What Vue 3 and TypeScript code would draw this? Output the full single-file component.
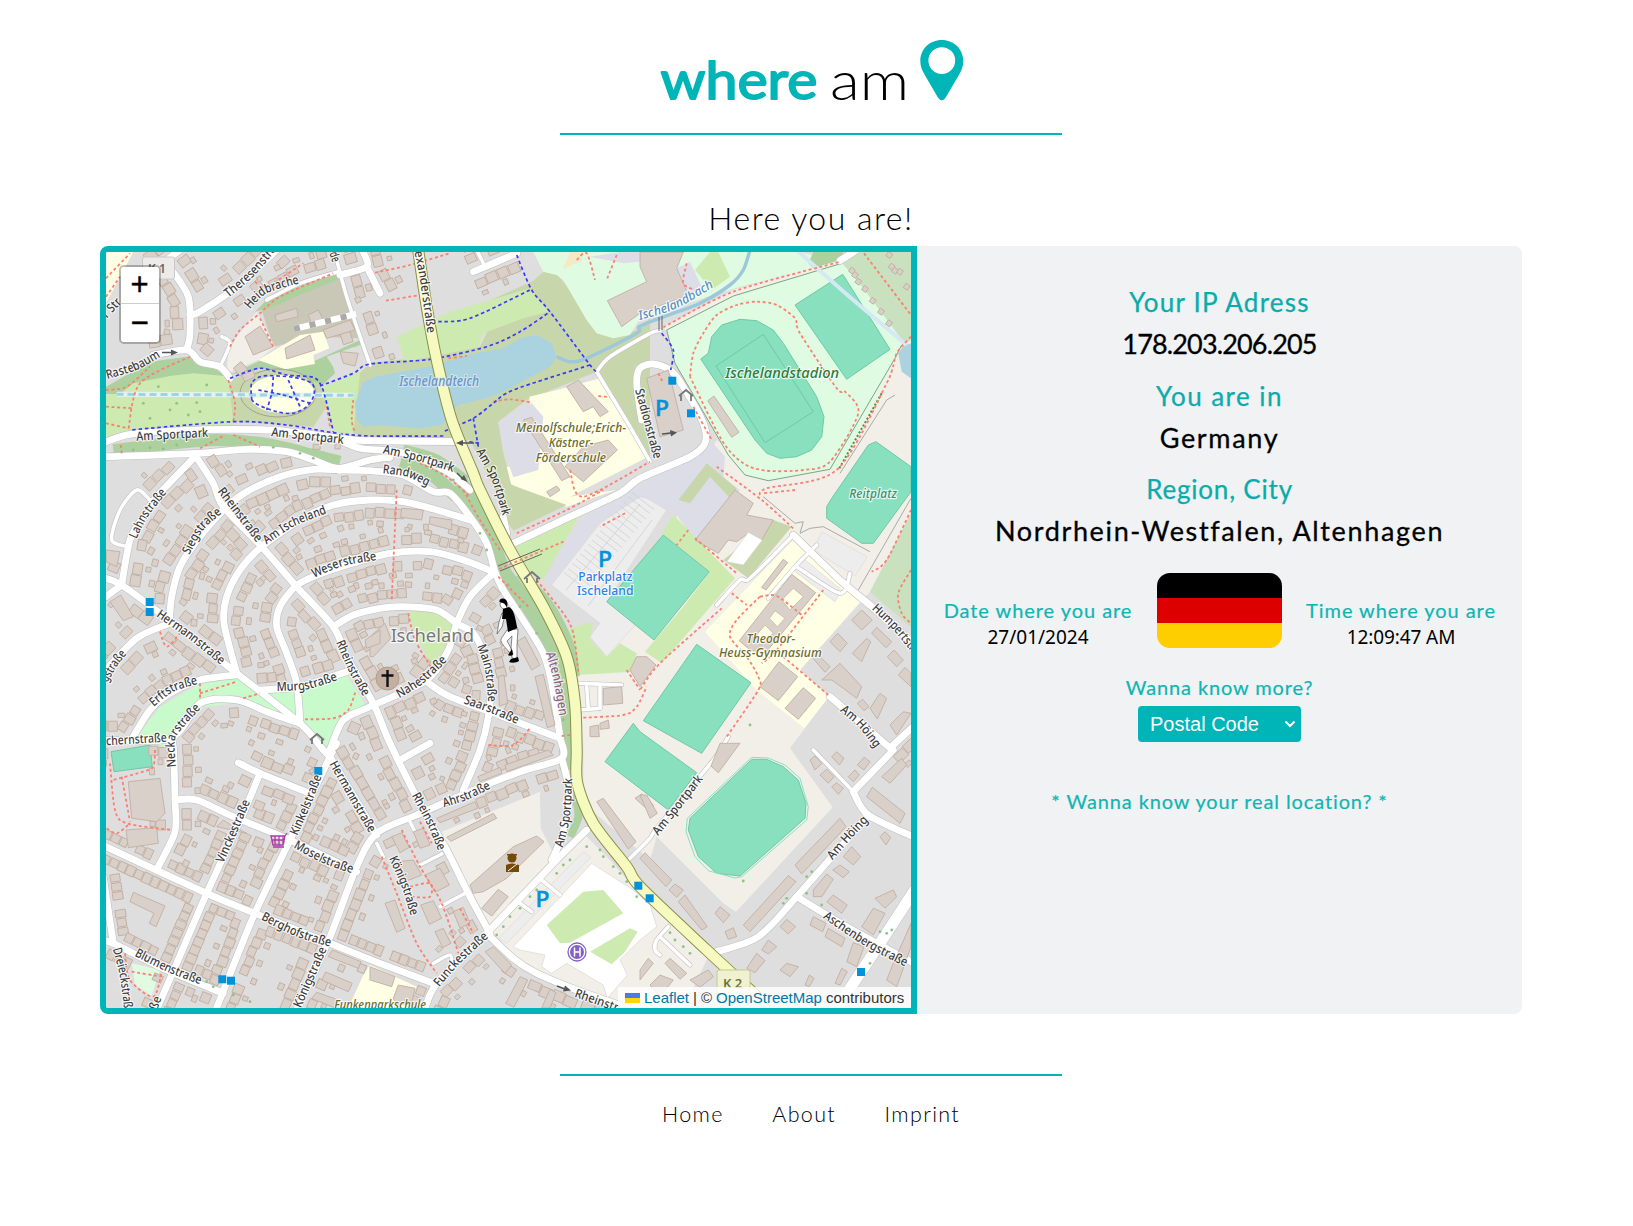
<script setup lang="ts">
type Pt = [number, number]

// Each sheet of the map is surveyed at 3 units per pixel from its own corner.
const sheets: Record<string, Pt> = {
  A: [100, 240], B: [370, 240], C: [640, 240],
  D: [100, 490], E: [370, 490], F: [640, 490],
  G: [100, 750], H: [370, 750], I: [640, 750],
}

function pts(src: string): Pt[] {
  let origin: Pt = [0, 0]
  const out: Pt[] = []
  for (const token of src.trim().split(/\s+/)) {
    if (sheets[token]) { origin = sheets[token]; continue }
    const [x, y] = token.split(',').map(Number)
    out.push([+(origin[0] + x / 3).toFixed(1), +(origin[1] + y / 3).toFixed(1)])
  }
  return out
}
const poly = (src: string) => pts(src).map((p) => p.join(',')).join(' ')

function curve(src: string): string {
  const p = pts(src)
  let d = `M${p[0]}`
  for (let i = 0; i < p.length - 1; i++) {
    const a = p[i - 1] ?? p[i], b = p[i], c = p[i + 1], e = p[i + 2] ?? c
    const k = 7
    d += `C${b[0] + (c[0] - a[0]) / k},${b[1] + (c[1] - a[1]) / k} ${c[0] - (e[0] - b[0]) / k},${c[1] - (e[1] - b[1]) / k} ${c[0]},${c[1]}`
  }
  return d
}

const areas: [string, string][] = [
  ['land', 'C 230,600 380,722 813,280 F 813,70 690,305 480,540 565,620 450,775 I 578,172 288,485 250,460 50,260 H 840,330 640,160 E 640,770 620,555 700,500'],
  ['land', 'H 215,245 510,125 512,235 560,330 345,540'],
  ['land', 'H 345,540 640,250 720,330 840,470 I 0,400 210,610 130,774 H 745,774 500,680'],
  ['school', 'A 18,36 100,36 18,190'],
  ['brown', 'A 485,210 520,190 720,100 780,295 655,290 520,320'],
  ['forest', 'A 465,215 500,180 712,92 722,115 600,165 520,200'],
  ['land', 'A 385,330 410,290 470,215 525,320 475,360 380,400'],
  ['grass', 'A 18,470 60,450 110,420 200,395 380,400 405,560 90,572 18,590'],
  ['forest', 'A 18,440 150,365 260,350 330,375 375,408 280,400 210,408 100,430 60,462 18,462'],
  ['forest', 'A 390,405 480,362 560,388 650,360 780,300 780,315 690,348 705,400 665,438 600,420 480,385'],
  ['school', 'A 475,360 600,285 670,275 688,325 640,345 645,372 555,388'],
  ['resid', 'A 680,350 760,322 812,370 720,412'],
  ['scrub', 'A 385,420 480,390 560,410 660,430 680,500 640,560 400,545'],
  ['grass', 'A 665,440 840,370 840,590 700,578'],
  ['scrub', 'A 780,400 B 0,368 180,350 330,320 350,280 340,190 490,122 520,95 560,102 600,150 650,240 680,275 730,295 800,270 840,235 840,660 680,395 470,480 385,545 400,640 440,780 390,780 300,600 0,590 A 760,580'],
  ['grass', 'B 80,290 240,215 480,145 535,215 460,235 340,280 325,320 105,365'],
  ['water', 'A 840,405 790,425 765,490 770,540 790,560 B 30,556 150,565 215,555 265,495 350,475 400,455 540,380 560,350 545,310 500,285 450,295 400,325 290,345 200,375 30,408'],
  ['sport', 'B 490,36 C 480,36 600,65 300,140 0,235 B 780,285 730,295 680,280 650,240 580,120 560,105 520,95'],
  ['grass', 'C 165,90 210,36 235,36 270,110 215,150'],
  ['sand', 'B 578,88 600,36 640,36 635,62'],
  ['indus', 'B 660,50 C -60,36 0,36 B 810,65 760,70'],
  ['indus', 'C 110,85 150,65 185,140 145,165'],
  ['allot', 'C 600,60 660,36 813,36 813,300 790,312 640,110'],
  ['forest', 'C 505,70 520,36 610,36 600,60 520,85'],
  ['land', 'C 70,262 280,150 600,62 610,70 280,170 80,275'],
  ['sport', 'C 80,270 280,168 605,70 640,105 790,305 765,355 600,680 385,722 315,705 265,645 105,370'],
  ['water', 'C 775,340 790,318 813,310 813,415 785,395'],
  ['allot', 'F 813,70 690,305 813,412'],
  ['school', 'B 478,470 560,450 690,415 835,650 600,770 E 740,0 590,50 430,10 410,-70 500,-70'],
  ['scrub', 'E 370,-40 440,-10 590,45 430,122 400,80'],
  ['indus', 'B 385,550 485,490 520,530 505,690 430,712 405,640'],
  ['indus', 'C 10,700 215,605 255,650 F 250,-30 300,0 165,150 105,70 60,50 0,30 E 690,95 540,285 520,270 590,150 640,85'],
  ['grass', 'E 430,165 625,80 520,270 460,235'],
  ['parking', 'E 545,285 690,100 F 0,20 20,25 80,60 E 710,335 800,400 710,500 660,440 690,400 600,330'],
  ['grass', 'E 605,490 600,415 670,395 660,450 710,500 750,460 800,490 790,545 620,555'],
  ['grass', 'F 15,485 65,520 285,265 135,110 100,75 65,130 210,245 130,350'],
  ['scrub', 'C 115,780 200,670 290,745 270,775 210,710 150,790'],
  ['scrub', 'F 250,210 400,90 455,110 325,265'],
  ['school', 'F 195,425 465,145 665,330 480,540 567,620 493,715 350,600'],
  ['parking', 'F 520,180 545,125 682,200 645,258'],
  ['parking', 'F 470,215 490,205 605,300 585,335 465,245'],
  ['park', 'D 115,735 180,650 300,580 410,560 480,605 590,690 410,640 310,650 240,730 190,770'],
  ['park', 'D 480,605 740,555 800,650 720,695 685,775 600,700'],
  ['grass', 'E 115,360 200,368 262,402 240,450 185,530 130,420'],
  ['sport', 'G 95,640 180,660 155,737 105,705'],
  ['school', 'G 745,774 790,675 H 0,645 140,710 105,774'],
  ['white', 'H 430,590 665,340 790,420 840,465 I 50,530 0,570 H 750,630 772,675 712,745 700,705 590,640 545,670 515,650 525,615 450,600'],
  ['grass', 'H 530,525 640,425 700,420 760,490 600,578 570,580'],
  ['grass', 'H 660,605 780,535 803,545 765,605 725,643'],
  ['parking', 'H 385,565 640,305 662,322 410,580'],
]

const pitches = [
  'C 182,357 205,340 215,290 245,255 300,238 350,242 400,270 430,310 530,470 552,530 545,590 515,630 470,650 420,655 380,640 345,600',
  'C 228,378 370,283 520,515 375,608',
  'C 465,195 608,103 750,328 620,418',
  'C 560,800 575,775 685,615 708,605 813,680 F 813,5 700,160 665,160 560,85',
  'E 710,335 F 70,135 208,245 42,450',
  'F 10,692 170,463 333,578 185,790',
  'E 705,815 790,700 F 0,725 I 170,68 85,180',
  'I 335,28 380,28 430,50 475,90 498,160 495,205 300,378 230,370 175,320 145,240 150,205',
  'G 33,5 150,-15 157,50 42,65',
]

const landmarks = [
  'B 712,182 C 20,125 0,80 0,36 130,36 110,85 145,165 0,220 B 755,260',
  'C 203,482 222,468 297,577 275,592',
  'C 20,415 85,390 130,570 60,590',
  'A 435,290 480,258 520,320 460,345', 'A 555,325 630,285 645,330 560,357',
  'A 425,405 460,390 465,410 435,425', 'A 720,335 775,340 765,378 730,370',
  'A 525,225 590,205 595,230 530,245', 'A 625,225 655,210 670,240 635,250',
  'A 670,270 750,240 765,270 680,295',
  'B 460,540 485,532 600,710 575,722',
  'B 590,440 625,420 715,515 690,530 670,500 640,515',
  'B 585,680 640,620 715,600 742,630 640,725', 'B 530,755 560,738 570,750 540,770',
  'F 165,150 285,0 340,40 320,75 400,90 365,150 325,130 290,155 265,150 235,190',
  'F 365,292 430,208 443,218 378,300',
  'F 298,452 455,253 527,308 375,490 330,480',
  'F 360,590 417,515 473,560 415,632', 'F 435,655 490,593 527,625 475,688',
  'E 780,540 800,500 F 20,500 48,525 0,590',
  'E 700,595 755,590 758,640 700,645', 'E 690,700 715,690 718,715 690,718', 'E 660,710 685,705 688,740 660,740',
  'H 230,262 370,190 380,205 243,274', 'H 300,405 430,290 500,258 522,275 410,385 340,425 310,430',
  'H 335,475 385,418 415,440 365,498',
  'H 200,205 315,155 323,175 210,218', 'H 405,45 535,0 550,15 410,65', 'H 323,80 390,52 396,70 330,95',
  'H 345,605 370,590 425,645 405,670', 'H 407,760 450,680 473,690 432,772', 'H 515,774 540,718 558,728 540,774',
  'H 680,155 700,145 798,275 775,297', 'H 795,145 815,132 850,165 845,190',
  'H 45,460 75,450 105,535 80,547', 'H 85,335 130,330 155,375 105,395', 'H 152,465 190,452 215,505 178,523',
  'H 165,375 210,355 238,405 195,427', 'H 65,260 95,248 118,292 90,308', 'H 130,245 160,235 180,285 150,295',
  'H 195,545 220,535 243,580 218,593', 'H 250,485 280,472 300,520 270,535', 'H 0,650 75,680 65,710 0,690', 'H 70,745 85,705 135,715 125,760 80,765',
  'G 85,95 180,85 195,190 170,215 95,205', 'G 78,240 170,233 175,280 85,293',
  'G 90,455 100,427 195,468 168,530 148,520 162,490',
  'G 350,230 370,210 400,230 440,250',
  'G 665,690 677,666 757,700 745,725', 'G 685,620 697,600 783,635 775,655', 'G 635,745 650,727 715,750 705,774',
  'E 0,440 45,400 62,445 10,500 0,500', 'D 18,180 60,185 50,230 18,215', 'D 795,450 840,420 840,460 800,475',
  'E 440,455 465,440 510,525 485,540', 'E 495,560 520,553 555,705 532,713',
  'E 385,560 402,555 413,640 388,648', 'E 95,55 160,60 155,90 92,82', 'E 180,80 245,90 245,120 178,102',
  'D 30,335 62,315 100,380 70,392',
  'I 465,345 600,205 618,230 485,372', 'I 310,525 445,377 468,395 330,545',
  'I 520,420 560,372 580,388 545,440 520,440', 'I 560,455 580,435 622,465 605,490', 'I 705,445 760,420 770,440 735,475',
  'I 665,530 700,475 735,490 700,555', 'I 510,525 520,500 558,520 548,545', 'I 555,560 565,535 615,565 605,590', 'I 620,635 640,578 672,590 650,650',
  'I 725,80 785,25 800,45 750,100', 'I 680,140 697,112 795,190 780,220', 'I 720,260 735,245 752,262 738,285',
  'I 610,320 635,290 662,320 640,345', 'I 578,360 600,345 628,365 610,383', 'I 420,530 440,508 467,530 445,552', 'I 365,600 385,570 410,590 385,612',
  'I 0,325 15,308 95,390 78,410', 'I 87,420 105,402 130,420 110,442', 'I 115,455 135,435 202,530 185,540',
  'I 225,490 240,470 270,495 250,518', 'I 255,545 280,533 290,560 265,568', 'I 75,640 90,625 140,670 120,688', 'I 0,660 25,625 40,640 0,690',
  'I 420,660 440,640 475,650 450,680', 'I 0,135 20,135 52,190 30,205', 'I 213,48 240,-20 300,-20 235,68', 'I 30,705 60,675 100,690 60,740', 'I 150,690 205,660 220,680 180,712',
  'I 320,655 350,610 375,632 345,668', 'I 585,700 605,655 622,665 600,705', 'I 495,705 508,675 522,685 508,710', 'I 740,690 760,640 813,520 813,590 770,710',
  'I 510,30 525,18 545,40 525,60', 'I 540,75 560,58 582,80 565,100', 'I 575,110 590,98 610,115 595,133', 'I 575,20 590,5 612,25 598,45', 'I 625,80 645,60 658,75 640,95', 'I 652,45 672,22 690,35 672,60',
  'F 635,390 665,360 697,390 665,420', 'F 570,455 593,430 622,460 600,485', 'F 637,490 680,445 692,455 665,515', 'F 695,430 710,412 755,455 738,473',
  'F 515,500 530,490 570,530 555,547', 'F 545,570 600,520 665,590 650,625 610,595 575,570', 'F 742,500 762,480 790,510 770,530', 'F 775,555 795,532 813,550 813,590',
  'F 652,640 668,628 687,650 672,662', 'F 690,655 720,610 740,625 712,687', 'F 750,705 790,665 813,670 770,735',
]
const courts = ['F 425,330 460,295 490,320 450,360', 'F 388,385 405,362 435,385 412,410', 'F 345,440 375,405 400,430 360,465']

// class, building spacing in px (0 = no houses), course
const roads: [string, number, string][] = [
  ['r', 0, 'A 18,605 90,583 240,572 400,568 540,572 740,597 B 0,602 260,605'],
  ['r', 0, 'A 18,650 290,640 440,628 560,635 640,660 715,685 B 0,660 60,652'],
  ['r', 0, 'A 700,592 B -30,625 60,632 140,650 240,700 300,750'],
  ['r', 11, 'A 720,690 640,688 540,710 440,755 D 380,50 300,140 240,230 215,320 208,400'],
  ['r', 0, 'A 715,690 B 0,692 100,705 190,755 E 240,10 300,80 350,160 375,245 400,300 460,390 520,490 545,580 570,740'],
  ['r', 12, 'A 285,645 340,730 D 370,50 485,170 590,290 700,410 740,500 820,640 E 60,760 H 160,180 230,300 300,440 360,550'],
  ['r', 12, 'A 285,650 170,770 D 130,80 90,150 65,285'],
  ['n', 0, 'D 150,30 110,0 60,60 35,150 85,170'],
  ['r', 12, 'D 18,265 65,285 200,385 410,550'],
  ['r', 0, 'D 410,550 600,700 670,780 G 690,20'],
  ['r', 10, 'G 710,-20 690,20 570,270 460,500 350,774'],
  ['r', 12, 'G 690,20 830,255'],
  ['r', 12, 'D 18,320 65,285'], ['r', 12, 'D 208,400 110,445 18,540'],
  ['r', 10, 'E 300,90 200,60 100,35 0,30 D 700,45 600,90 485,170 420,240 380,320 372,400 410,550'],
  ['r', 10, 'E 370,245 280,210 180,185 60,190 D 740,225 640,260 585,290 540,350 530,410 560,490 590,580 600,700'],
  ['r', 10, 'D 700,410 760,375 840,355 E 100,350 200,360 260,400 310,430 340,490 362,580 355,680 330,780 H 280,120'],
  ['r', 11, 'E 370,250 300,320 260,400 235,480 170,570 0,650 D 730,690 690,780'],
  ['r', 10, 'D 100,740 150,660 210,610 300,570 410,555'],
  ['r', 10, 'D 480,600 600,590 740,545'],
  ['r', 10, 'D 0,750 210,745 300,640 410,630 500,665 600,700'],
  ['r', 10, 'E 170,575 240,620 400,680 570,745'],
  ['r', 11, 'E 570,745 H 575,25 450,65 300,125 140,195 20,250 G 770,350 690,560 590,780'],
  ['r', 0, 'H 575,25 592,90 598,150 575,260 545,330'],
  ['r', 0, 'H 650,240 550,340 350,550'], ['r', 11, 'H 350,550 200,700 160,790'],
  ['r', 13, 'H 350,550 430,625 500,670 620,720 790,780'],
  ['r', 9, 'G 0,282 320,430 465,490 690,580 840,640 H 190,700'],
  ['r', 11, 'D 210,745 G 220,-10 225,150 225,245 175,350'],
  ['r', 10, 'G 225,150 290,150 400,200 570,270 770,365'],
  ['r', 11, 'G 415,38 480,70 630,130'],
  ['r', 9, 'G 480,70 430,190 320,430 230,640 165,790'],
  ['r', 9, 'G 10,380 40,580'], ['r', 9, 'G 0,570 40,580 200,660 370,730'],
  ['r', 11, 'H 90,30 180,-20'], ['n', 0, 'H 20,280 40,320'], ['n', 0, 'H 120,215 135,245'], ['n', 0, 'H 150,345 215,312'], ['n', 0, 'H 210,470 285,430'], ['n', 0, 'H 190,640 240,615 245,650'],
  ['n', 0, 'H 515,390 570,435'], ['n', 0, 'H 450,460 485,485'],
  ['r', 12, 'A 215,90 265,170 270,280 260,330'],
  ['r', 12, 'A 160,345 260,330 300,365 360,380 390,415'],
  ['r', 12, 'A 270,225 300,215 410,140 530,30'],
  ['r', 12, 'A 240,30 160,90'],
  ['n', 0, 'A 360,380 390,310 365,290'],
  ['n', 11, 'A 500,180 600,130 715,95'],
  ['n', 12, 'A 700,20 740,170 810,375'],
  ['r', 12, 'A 720,105 800,80 790,36'], ['r', 12, 'A 800,80 840,160'],
  ['r', 12, 'B 310,95 440,40'], ['n', 0, 'B 340,70 320,30'],
  ['n', 0, 'B 680,395 780,560 840,665'], ['n', 0, 'B 680,395 720,350 840,280 C 60,272'],
  ['r', 0, 'E 430,160 600,80 750,10 C 0,715 150,650 195,610 190,550 130,440 90,390 40,372 0,385 B 800,430 815,540'],
  ['r', 0, 'E 400,80 410,130'],
  ['r', 0, 'C 600,62 650,30'],
  ['r', 0, 'F 460,135 600,270 690,345'], ['r', 0, 'F 690,345 830,470'],
  ['r', 0, 'F 570,620 750,774'], ['r', 13, 'F 750,774 830,700'],
  ['r', 0, 'I 640,125 760,0'], ['n', 0, 'I 520,0 640,125'], ['r', 0, 'I 640,125 685,195 830,265'],
  ['r', 0, 'I 685,195 470,440 355,560 220,608'], ['r', 0, 'I 470,440 620,530 830,645'],
  ['w', 0, 'I 830,410 720,580 600,760'],
  ['n', 0, 'E 620,580 755,585'], ['n', 0, 'E 630,660 690,655'], ['n', 0, 'E 650,590 655,655'], ['n', 0, 'E 690,590 690,655'],
  ['n', 0, 'H 770,335 840,265 I 50,235 220,30 F 265,740'],
  ['n', 0, 'F 385,325 470,225 530,165'], ['n', 0, 'F 470,230 600,310 630,250'],
  ['n', 0, 'F 230,345 300,270 330,265 455,140'],
  ['n', 0, 'I 85,530 50,570 45,600 60,615'], ['n', 0, 'I 60,560 150,645'],
]
const mainRoad = 'B 143,20 170,200 200,360 245,540 310,700 E 330,0 420,180 520,350 590,500 615,640 H 620,0 622,100 670,220 770,350 I 0,410 200,600 330,720 350,740'
const verges: [string, number][] = [
  ['E 270,-20 350,120 400,250 480,350 545,470 575,580 590,720 H 595,60', 17],
  ['E 450,250 540,350 600,470 615,560', 10],
  ['A 40,630 200,612 350,600 500,612 640,645 720,665', 12],
  ['B 90,670 180,700 260,770', 13],
  ['B 100,625 200,655 290,720', 8],
  ['H 615,130 625,200 600,260', 8],
]

const reds = [
  'A 18,115 90,40', 'A 18,170 60,110', 'A 390,320 420,270 480,220 540,170 700,100', 'A 480,235 520,320', 'A 465,125 500,140 610,70',
  'A 385,420 405,490 400,545', 'A 270,350 120,430 85,570', 'A 18,500 100,505', 'A 18,550 85,565', 'A 18,450 80,440 150,380', 'A 300,625 375,585', 'A 400,585 480,620', 'A 62,615 65,640',
  'A 760,480 755,540 765,580', 'A 680,500 690,560', 'B 15,98 120,75 240,40', 'B 48,182 150,165', 'B 235,355 290,348', 'B 370,485 420,478 480,487',
  'B 685,468 720,472', 'B 600,690 640,770 840,665', 'B 620,60 650,40 675,120', 'B 740,45 712,115', 'B 150,670 230,710 300,770',
  'C 70,262 280,155 600,65', 'C 672,40 813,225', 'C 813,290 770,340 740,430 590,690 380,745 360,770',
  'C 150,410 160,340 190,280 230,225 290,195 350,185 410,195 465,235 480,280 590,445 615,455 655,520 570,665 490,690 380,692 310,670 245,600 150,410',
  'C 140,70 130,130 165,150', 'C 55,400 70,430', 'C 160,500 215,600', 'C 230,680 365,780 F 465,120',
  'F 465,0 370,10', 'F 245,355 60,520 0,600', 'F 275,310 320,345', 'F 360,320 290,390 270,440 320,500 355,560 355,600 260,740', 'F 360,320 410,318 485,375', 'F 550,300 410,480 365,520', 'F 430,500 565,615',
  'F 145,120 110,165', 'F 165,145 290,250', 'F 813,60 740,210 695,245', 'F 813,240 775,310 785,370 813,400',
  'E 80,0 65,330', 'E 115,370 135,450 185,535', 'E 280,0 330,90 390,180', 'E 385,260 480,355', 'E 500,270 580,370 610,430 625,545', 'E 640,683 760,675 800,650 830,590', 'E 355,765 430,765 480,715', 'E 440,130 590,60 700,0', 'E 765,70 690,110', 'E 770,540 810,600', 'E 575,738 600,735',
  'D 180,425 200,470 240,430', 'D 300,580 300,630', 'D 300,610 410,575', 'D 430,625 480,610', 'D 615,688 700,685 745,660 768,600',
  'G 30,40 45,180 80,220 215,240', 'G 65,80 90,215', 'G 165,0 160,50 130,65 40,90', 'G 20,235 50,250 85,225', 'G 75,610 90,690 160,740 185,665', 'G 95,665 185,680',
  'H 35,320 80,430 140,580 200,670', 'H 95,240 150,350 215,460 265,610', 'H 150,215 185,280', 'H 120,410 180,400 180,440 125,440', 'H 270,475 310,550',
]
const blues = [
  'B 440,45 485,150 540,215 660,375 680,395', 'B 205,245 300,235 480,150', 'A 660,438 760,400 810,372 B 180,358 350,320 450,275 540,215',
  'B 660,375 430,450 370,490 310,535 220,575', 'B 220,588 0,588 A 700,578 560,555 400,545 90,570', 'A 390,415 480,385 560,405 640,412 665,440 680,490 700,575',
  'A 455,480 455,430 490,408 580,412 635,430 642,465 620,500 580,520 530,515 475,495 455,480', 'A 475,450 550,465 630,490', 'A 520,410 515,460 500,510', 'A 565,420 600,500', 'B 310,535 325,620', 'B 260,600 330,610', 'C 65,280 100,330 92,390',
]

// label text, style, baseline from start to end
const labels: [string, string, string][] = [
  ['Am Sportpark', 's', 'A 110,602 325,590'], ['Am Sportpark', 's', 'A 513,588 730,612'], ['Rastebaum', 's', 'A 22,417 110,390 182,350'],
  ['Theresenstra', 's', 'A 385,173 460,110 530,28'], ['Heidbrache', 's', 'A 450,208 500,160 598,130'], ['r Str', 's', 'A 22,235 65,188'], ['de', 's', 'A 688,40 697,68'],
  ['exanderstraße', 's', 'B 133,36 150,120 172,280'], ['Am Sportpark', 's', 'B 38,640 150,665 248,696'], ['Randweg', 's', 'B 38,700 110,710 172,738'],
  ['Am Sportpark', 's', 'B 318,635 365,720 E 398,78'], ['Stadionstraße', 's', 'B 795,450 C 10,540 42,658'],
  ['Rheinstraße', 's', 'D 352,5 410,80 470,158'], ['Lahnstraße', 's', 'D 110,147 140,85 200,8'], ['Siegstraße', 's', 'D 268,195 310,120 365,70'],
  ['Am Ischeland', 's', 'D 500,163 580,110 680,70'], ['Weserstraße', 's', 'D 642,263 730,228 830,210'], ['Hermannstraße', 's', 'D 168,378 270,450 362,525'],
  ['gstraße', 's', 'D 22,578 50,530 80,492'], ['Erftstraße', 's', 'D 162,650 220,605 293,582'], ['chernstraße', 's', 'D 20,766 200,755'], ['Neckarstraße', 's', 'G 228,50 D 225,750 260,700 302,655'],
  ['Murgstraße', 's', 'D 530,603 620,598 713,570'], ['Rheinstraße', 's', 'D 708,457 745,540 790,620'], ['Mainstraße', 's', 'E 322,468 345,540 355,636'],
  ['Nahestraße', 's', 'E 88,625 160,580 232,512'], ['Saarstraße', 's', 'E 280,640 360,668 440,702'], ['Altenhagen', 'purple', 'E 527,490 550,570 568,678'],
  ['Vinckestraße', 's', 'G 370,340 410,250 450,155'], ['Kinkelstraße', 's', 'G 592,258 630,170 665,80'], ['Hermannstraße', 's', 'G 688,42 750,150 808,250'],
  ['Moselstraße', 's', 'G 580,293 670,340 755,370'], ['Berghofstraße', 's', 'G 482,508 590,560 690,590'], ['Blumenstraße', 's', 'G 103,617 200,665 300,703'],
  ['Dreieckstraß', 's', 'G 38,597 60,680 72,775'], ['Königstraße', 's', 'G 602,775 640,690 680,598'], ['aße', 's', 'G 165,800 185,745'],
  ['Rheinstraße', 's', 'H 125,137 170,220 205,302'], ['Ahrstraße', 's', 'H 222,172 290,150 363,115'], ['Königstraße', 's', 'H 57,325 95,410 122,497'],
  ['Am Sportpark', 's', 'H 578,293 600,200 607,85'], ['Funckestraße', 's', 'H 208,712 270,640 356,562'], ['Rheinstr', 's', 'H 612,740 740,785'],
  ['Am Sportpark', 's', 'I 55,257 110,190 190,87'], ['Am Höing', 's', 'I 578,330 630,270 685,212'], ['Aschenbergstraße', 's', 'I 548,503 670,585 795,650'],
  ['Humpertstr', 's', 'F 695,357 760,420 813,485'], ['Am Höing', 's', 'F 600,663 655,710 705,775'],
  ['Ischelandbach', 'river', 'C 0,240 110,205 222,140'], ['Ischelandteich', 'pond', 'B 88,437 327,437'],
  ['Meinolfschule;Erich-', 'olive', 'B 438,577 768,577'], ['Kästner-', 'olive', 'B 536,622 670,622'], ['Förderschule', 'olive', 'B 497,667 708,667'],
  ['Ischelandstadion', 'green', 'C 256,413 597,413'], ['Reitplatz', 'field', 'C 628,774 770,774'],
  ['Theodor-', 'olive', 'F 320,458 465,458'], ['Heuss-Gymnasium', 'olive', 'F 237,502 545,502'], ['Funkenparkschule', 'olive', 'G 703,778 H 168,778'],
  ['Parkplatz', 'blue', 'E 625,272 787,272'], ['Ischeland', 'blue', 'E 622,315 790,315'], ['Ischeland', 'place', 'E 62,455 312,455'],
]
const labelLen = (src: string) => {
  const p = pts(src)
  let n = 0
  for (let i = 1; i < p.length; i++) n += Math.hypot(p[i][0] - p[i - 1][0], p[i][1] - p[i - 1][1])
  return n
}

// Rows of houses are laid out on both sides of every residential street.
function inside([x, y]: Pt, ring: Pt[]): boolean {
  let hit = false
  for (let i = 0, j = ring.length - 1; i < ring.length; j = i++) {
    const [xi, yi] = ring[i], [xj, yj] = ring[j]
    if (yi > y !== yj > y && x < ((xj - xi) * (y - yi)) / (yj - yi) + xi) hit = !hit
  }
  return hit
}
function toSegment([x, y]: Pt, a: Pt, b: Pt): number {
  const dx = b[0] - a[0], dy = b[1] - a[1]
  const t = Math.max(0, Math.min(1, ((x - a[0]) * dx + (y - a[1]) * dy) / (dx * dx + dy * dy || 1)))
  return Math.hypot(x - a[0] - t * dx, y - a[1] - t * dy)
}
interface House { x: number; y: number; w: number; h: number; a: number }
function settle(): House[] {
  const rings = [...areas.map((a) => pts(a[1])), ...landmarks.map(pts), ...pitches.map(pts)]
  const lines = [...roads.map((r) => pts(r[2])), ...verges.map((v) => pts(v[0])), pts(mainRoad)]
  const houses: House[] = []
  let seed = 7
  const rnd = () => (seed = (seed * 16807) % 2147483647) / 2147483647
  for (const offset of [11.5, 22]) {
    for (const [, gap, src] of roads) {
      if (!gap || (offset > 12 && gap < 10)) continue
      const p = pts(src)
      for (const side of [-1, 1]) {
        for (let i = 1; i < p.length; i++) {
          const dx = p[i][0] - p[i - 1][0], dy = p[i][1] - p[i - 1][1]
          const len = Math.hypot(dx, dy)
          const step = offset > 12 ? gap * 1.9 : gap
          for (let t = 3; t < len; t += step) {
            if (rnd() < (gap < 10 ? 0.03 : 0.1)) continue
            const off = (offset + (gap < 10 ? 0 : rnd() * 3)) * side
            const at: Pt = [p[i - 1][0] + (dx * t - dy * off) / len, p[i - 1][1] + (dy * t + dx * off) / len]
            const small = offset > 12
            const w = small ? 4 + rnd() * 3 : gap - 1.8 + rnd() * 1.6, h = small ? 4 + rnd() * 2 : 8 + rnd() * 2.5
            if (rings.some((r) => inside(at, r))) continue
            if (lines.some((l) => l.some((q, k) => k > 0 && toSegment(at, l[k - 1], q) < h / 2 + 4.5))) continue
            if (houses.some((o) => Math.hypot(o.x - at[0], o.y - at[1]) < (o.w + w) / 2 - 0.5)) continue
            houses.push({ x: at[0], y: at[1], w, h, a: (Math.atan2(dy, dx) * 180) / Math.PI })
          }
        }
      }
    }
  }
  return houses
}
const houses = settle()

const stops = pts('D 149,336 149,366 G 655,63 367,688 393,692 C 97,422 153,520 H 805,407 I 29,445 663,666')
const trees = pts('A 130,490 175,440 210,510 230,490 300,515 320,435 150,535 265,525 290,488 100,630 150,623 190,627 230,615 520,622 600,640 640,655 B 150,640 200,680 250,720 E 330,130 350,180 415,285 450,350 500,430 540,500 580,690 I 310,393 500,380 515,365 430,460 440,445 500,430 545,465 720,545 740,550 755,540 690,640 105,570 130,590 150,610 90,548 H 650,290 690,300 700,320 730,350 750,370 770,395 800,440 600,330 580,345 560,370 500,420 480,440 450,475 420,500 400,530 380,555 G 320,695 340,710 400,735 450,755 F 330,705')
const bushes = pts('C 636,92 645,105 655,125 675,147 698,182 723,215 747,250 748,45 755,80 765,92 780,95 800,140')

const facts = [
  { title: 'Your IP Adress', value: '178.203.206.205', cls: 'ip' },
  { title: 'You are in', value: 'Germany', cls: 'country' },
  { title: 'Region, City', value: 'Nordrhein-Westfalen, Altenhagen', cls: 'region' },
]
const links = ['Home', 'About', 'Imprint']
</script>

<template>
  <div class="page">
    <header>
      <svg class="logo" width="320" height="76" viewBox="650 32 320 76" role="img">
        <text class="where" x="660.500" y="99.300" textLength="157" lengthAdjust="spacingAndGlyphs">where</text>
        <text class="am" x="830" y="100" textLength="79" lengthAdjust="spacingAndGlyphs">am</text>
        <path fill="#00b5b7" fill-rule="evenodd" d="M941.800 40C929.500 40 920.300 49.300 920.300 61C920.300 66 922 70 924.500 74.500L938.200 98Q941.800 102.500 945.400 98L959.200 74.500C961.700 70 963.300 66 963.300 61C963.300 49.300 954.100 40 941.800 40ZM941.800 47.200A13.400 13.400 0 1 1 941.800 74A13.400 13.400 0 1 1 941.800 47.200Z" />
      </svg>
    </header>
    <main>
      <h1>Here you are!</h1>
      <section class="board">
        <div class="map">
          <svg class="canvas" width="805" height="756" viewBox="106 252 805 756">
            <rect x="106" y="252" width="805" height="756" fill="#dfdedf" />
            <polygon v-for="(a, i) in areas" :key="'a' + i" :class="a[0]" :points="poly(a[1])" />
            <path v-for="(v, i) in verges" :key="'v' + i" class="verge" :d="curve(v[0])" :stroke-width="v[1]" />
            <ellipse cx="278" cy="393" rx="38" ry="24" fill="#c8d7ab" stroke="#a4a38a" />
            <ellipse cx="282" cy="394" rx="33" ry="19" fill="#ffffe5" />
            <path class="stream" :d="curve('B 560,350 600,365 650,355 800,280 C 0,258 100,220 180,190 270,135 310,90 330,30')" />
            <path class="streamcase" :d="curve('A 50,463 760,466')" />
            <path class="streamdash" :d="curve('A 50,463 760,466')" />
            <polygon v-for="(p, i) in pitches" :key="'p' + i" class="pitch" :points="poly(p)" />
            <polygon class="fence" :points="poly('I 335,22 385,24 435,45 480,85 505,170 500,210 305,380 285,384 205,362 165,320 138,245 142,205')" />
            <polyline class="border" :points="poly('C 80,270 280,168 605,70')" />
            <polyline class="border" :points="poly('C 80,270 105,370 265,645 315,705 385,722 570,688 765,355 785,315')" />
            <polyline class="wall" :points="poly('C 600,700 740,480 765,465')" />
            <polyline class="wall" :points="poly('F 370,20 465,100 490,95 480,130 510,115 550,110 690,185')" />
            <polyline class="wall" :points="poly('F 813,25 655,300')" />
            <polyline class="hedge" :points="poly('C 725,460 595,690')" />
            <path class="canal" :d="curve('C 470,30 640,180 800,315')" />
            <g class="lots">
              <path v-for="n in 9" :key="n" :d="`M${556 + n * 8},${582 - n * 9.500}l22,17M${560 + n * 8},${578 - n * 9.500}l22,17`" />
              <path d="M566,590L640,504M588,606L652,520" />
            </g>
            <path v-for="(r, i) in roads" :key="'c' + i" :class="['case', r[0]]" :d="curve(r[2])" />
            <path v-for="(r, i) in roads" :key="'r' + i" :class="['road', r[0]]" :d="curve(r[2])" />
            <g class="bldg">
              <rect v-for="(h, i) in houses" :key="'h' + i" :width="h.w" :height="h.h" :transform="`translate(${h.x.toFixed(1)} ${h.y.toFixed(1)}) rotate(${h.a.toFixed(0)}) translate(${-h.w / 2} ${-h.h / 2})`" />
              <polygon v-for="(b, i) in landmarks" :key="'b' + i" :points="poly(b)" />
              <rect v-for="(b, i) in bushes" :key="'u' + i" :x="b[0] - 2.5" :y="b[1] - 2.5" width="5" height="5" :transform="`rotate(35 ${b[0]} ${b[1]})`" />
            </g>
            <circle cx="387.500" cy="678.500" r="11.500" fill="#c4b0a3" stroke="#b39c8c" />
            <polygon v-for="(b, i) in courts" :key="'k' + i" class="court" :points="poly(b)" />
            <polygon class="white" :points="poly('F 260,215 325,127 367,150 310,225')" />
            <path class="ramp" d="M294,329L356,314" /><path class="rampdash" d="M294,329L356,314" />
            <path v-for="(r, i) in reds" :key="'f' + i" class="foot" :d="curve(r)" />
            <path v-for="(b, i) in blues" :key="'y' + i" class="cycle" :d="curve(b)" />
            <path class="maincase" :d="curve(mainRoad)" /><path class="main" :d="curve(mainRoad)" />
            <path class="bridge" d="M498,566L540,549M500,571L542,554M659,317v14M662,316v14" />
            <path class="foot" d="M499,569L565,541" />
            <circle v-for="(t, i) in trees" :key="'t' + i" class="tree" :cx="t[0]" :cy="t[1]" r="1.400" />
            <rect v-for="(s, i) in stops" :key="'s' + i" :x="s[0] - 4" :y="s[1] - 4" width="8" height="8" fill="#0092da" />
            <path class="shaft" d="M162,352.500h9M460,443h14M662,434l9,-1M457,473l5,5M557,986l8,3" />
            <path class="arrow" d="M171,349.500l7,3l-7,3zM463,440l-7,3l7,3zM670,430l7,2.500l-6,4zM464,475l3.500,7l-7,-3zM565,985.500l6,5l-8,1z" />
            <g class="shelter"><path d="M524,579l8,-7l8,7M527,578v5M537,578v5M310,740l7,-6l7,6M312,739v5M322,739v5M679,396l7,-6l7,6M681,395v6M691,395v6" /></g>
            <path d="M387.500 670v17M381.500 675.500h12" stroke="#111" stroke-width="2.400" />
            <g fill="#734a08"><circle cx="512" cy="858" r="4.500" /><rect x="507" y="854" width="10" height="1.500" /><path d="M506 865q6-3 13 0v7h-13z" /><path d="M508 871l9-7" stroke="#fff" stroke-width="1" /></g>
            <g fill="none" stroke="#ac39ac" stroke-width="1.300"><path d="M271 836h14l-2 9h-10zM285 836l2-3M273 847h11M275 836v9M279 836v9M283 836v8M272 840h12" /></g>
            <circle cx="577" cy="952" r="9" fill="none" stroke="#8461c4" stroke-width="1.300" /><circle cx="577" cy="952" r="7" fill="#8461c4" /><path d="M574.500 947.500v9M580 947.500v9M574.500 952h5.500" stroke="#fff" stroke-width="1.500" />
            <text class="parksign" x="655" y="416" textLength="14" lengthAdjust="spacingAndGlyphs">P</text><text class="parksign" x="598" y="567" textLength="14" lengthAdjust="spacingAndGlyphs">P</text><text class="parksign" x="535.500" y="906.500" textLength="14" lengthAdjust="spacingAndGlyphs">P</text>
            <rect class="shield" x="142.500" y="257" width="32" height="22" rx="2" /><text class="shieldtext" x="148" y="273">K 1</text>
            <rect class="shield k2" x="717" y="970" width="33" height="28" rx="2" /><text class="shieldtext k2t" x="723" y="987.500">K 2</text>
            <template v-for="(l, i) in labels" :key="'l' + i">
              <path :id="'line' + i" :d="curve(l[2])" fill="none" />
              <text :class="['label', l[1]]" :textLength="labelLen(l[2])" lengthAdjust="spacingAndGlyphs"><textPath :href="'#line' + i">{{ l[0] }}</textPath></text>
            </template>
            <g class="walker">
              <path fill="#fff" stroke="#222" stroke-width=".5" d="M504 619L502 627L497 634L499 622L502 613L507 616ZM507 630L501 639C500 643 506 648 509 652L513 654L511 648L507 641L512 636L511 648L512 658L517 659L517 645L518 629ZM500 603C500 608 503 610 507 608L505 600Z" />
              <path d="M499.500 602C499 598 504 597.500 506.500 600.500C508 603 507.500 605 507 607C505.500 606 505 603.500 503 603ZM503 609L509 607C514 610 515 616 517 627L517.500 628L508 632L506 619L502 619ZM512 649L513 655C511 656 509 656 508 655ZM511 659L518 657L519 661C516 663 512 663 509 662Z" />
            </g>
          </svg>
          <div class="zoom"><button type="button">+</button><button type="button">−</button></div>
          <div class="credit">
            <svg width="15" height="10" viewBox="0 0 15 10"><path fill="#4c7be1" d="M0 0h15v5H0z" /><path fill="#ffd500" d="M0 5h15v5H0z" /></svg>
            <a>Leaflet</a><span>|</span><span>©</span><a>OpenStreetMap</a><span>contributors</span>
          </div>
        </div>
        <aside>
          <div v-for="f in facts" :key="f.cls" :class="['fact', f.cls]">
            <h2>{{ f.title }}</h2>
            <p>{{ f.value }}</p>
          </div>
          <div class="when">
            <div class="col"><h3>Date where you are</h3><p class="date">27/01/2024</p></div>
            <svg class="flag" width="125" height="75" viewBox="0 0 125 75"><path d="M0 0h125v25H0z" /><path fill="#d00" d="M0 25h125v25H0z" /><path fill="#ffce00" d="M0 50h125v25H0z" /></svg>
            <div class="col"><h3>Time where you are</h3><p class="time">12:09:47 AM</p></div>
          </div>
          <h3 class="more">Wanna know more?</h3>
          <div class="select"><span>Postal Code</span><svg width="12" height="8" viewBox="0 0 12 8"><path d="M1.500 1.500L6 6L10.500 1.500" fill="none" stroke="#fff" stroke-width="2" /></svg></div>
          <h3 class="real">* Wanna know your real location? *</h3>
        </aside>
      </section>
    </main>
    <footer><a v-for="l in links" :key="l">{{ l }}</a></footer>
  </div>
</template>

<style>
body { background: #fff; }
</style>

<style scoped>
* { box-sizing: border-box; }
.page { width: 1633px; height: 1226px; overflow: hidden; display: flex; flex-direction: column; align-items: center; font-family: Lato, "Noto Sans", sans-serif; color: #000; padding-right: 11px; }
h1, h2, h3, p { margin: 0; font-weight: 400; white-space: nowrap; }
header { width: 502px; height: 135px; padding-top: 32px; border-bottom: 2px solid #00b5b7; }
.logo { display: block; margin-left: 90px; overflow: visible; }
.where { font: 400 53px Lato, sans-serif; fill: #00b5b7; stroke: #00b5b7; stroke-width: 1.8; stroke-linejoin: round; }
.am { font: 300 54px Lato, sans-serif; fill: #000; }
main { width: 1422px; }
h1 { height: 111px; padding-top: 61px; text-align: center; font-size: 32px; line-height: 44px; font-weight: 300; letter-spacing: 1.5px; }
.board { display: flex; height: 768px; }
.map { position: relative; width: 817px; height: 768px; border: 6px solid #00b5b7; border-radius: 8px 0 0 8px; overflow: hidden; flex: none; }
.canvas { display: block; }
.zoom { position: absolute; left: 12.5px; top: 12.5px; width: 42px; border: 2px solid rgba(0, 0, 0, .25); border-radius: 5px; background-clip: padding-box; overflow: hidden; }
.zoom button { display: block; width: 38px; height: 37.5px; padding: 0; border: 0; background: #fff; font: 31px/36px "Liberation Sans", Arial, sans-serif; color: #000; -webkit-text-stroke: .4px #000; }
.zoom button:first-child { border-bottom: 1px solid #ccc; }
.credit { position: absolute; right: 0; bottom: 0; width: 293px; height: 21px; display: flex; align-items: center; gap: 4px; padding-left: 7px; background: rgba(255, 255, 255, .82); font: 15px/21px "Liberation Sans", Arial, sans-serif; color: #333; white-space: nowrap; }
.credit a { color: #0078a8; }
aside { width: 605px; background: #f0f2f4; border-radius: 0 8px 8px 0; padding-top: 36px; display: flex; flex-direction: column; align-items: center; }
.fact { height: 93.7px; text-align: center; }
.fact h2 { height: 42px; font-size: 26px; line-height: 40px; color: #0aabab; letter-spacing: 1.25px; -webkit-text-stroke: .25px; }
.country h2 { letter-spacing: 1.45px; }
.region h2 { letter-spacing: .8px; }
.fact p { height: 40px; font-size: 27px; line-height: 40px; letter-spacing: 1.65px; -webkit-text-stroke: .3px; }
.ip p { letter-spacing: -.85px; }
.when { display: flex; gap: 25px; margin-top: 10px; height: 101px; }
.flag { border-radius: 13px; }
.col { width: 188px; padding-top: 24px; display: flex; flex-direction: column; align-items: center; }
h3 { font-size: 20px; line-height: 26px; color: #0fb5b2; letter-spacing: .95px; -webkit-text-stroke: .2px; }
.col p { font: 19px/28px "Noto Sans", sans-serif; }
.col .time { letter-spacing: -.1px; }
.more { letter-spacing: .88px; }
.select { width: 163px; height: 36px; margin-top: 6px; padding: 0 5px 0 12px; display: flex; align-items: center; justify-content: space-between; border-radius: 4px; background: #00b5b7; color: #fff; font: 20px "Liberation Sans", Arial, sans-serif; flex: none; }
.real { margin-top: 46px; letter-spacing: .88px; }
footer { margin-top: 60px; width: 502px; border-top: 2px solid #00b5b7; display: flex; justify-content: center; gap: 48.5px; padding-top: 24.5px; font-size: 21.5px; line-height: 26px; font-weight: 300; letter-spacing: 1.35px; }

.resid { fill: #dfdedf; }
.land { fill: #f2efe9; }
.school { fill: #ffffe5; }
.brown { fill: #c9c7b5; }
.forest { fill: #add19e; }
.grass { fill: #cdebb0; }
.scrub { fill: #c8d7ab; }
.water { fill: #aad3df; }
.sport { fill: #dffce2; }
.sand { fill: #f5e9c6; }
.indus { fill: #dddde8; }
.allot { fill: #c9e1bf; }
.parking { fill: #ededed; stroke: #ddd0d0; stroke-width: .5; }
.park { fill: #c8facc; }
.white { fill: #fff; stroke: #ccc; stroke-width: .5; }
.verge { fill: none; stroke: #add19e; }
.pitch { fill: #88e0be; stroke: #6fc9a5; stroke-width: 1; }
.fence { fill: none; stroke: #88e0be; }
.border { fill: none; stroke: #7fa57f; stroke-width: 1; }
.wall { fill: none; stroke: #aaa; stroke-width: 1; }
.hedge { fill: none; stroke: #3a9a3a; stroke-width: 2; stroke-dasharray: 2 2; }
.stream { fill: none; stroke: #9cc8da; stroke-width: 3.5; }
.streamcase { fill: none; stroke: #e6f2f2; stroke-width: 5; }
.streamdash { fill: none; stroke: #9dd3e6; stroke-width: 3; stroke-dasharray: 7 4; }
.canal { fill: none; stroke: #d5e8f5; stroke-width: 4; }
.lots { fill: none; stroke: #ccc; stroke-width: .7; }
.case { fill: none; stroke: #c4c2c2; stroke-linecap: round; stroke-linejoin: round; }
.road { fill: none; stroke: #fff; stroke-linecap: round; stroke-linejoin: round; }
.case.r { stroke-width: 8; } .road.r { stroke-width: 6.8; }
.case.n { stroke-width: 4.8; } .road.n { stroke-width: 3.6; }
.case.w { stroke-width: 12; } .road.w { stroke-width: 11; }
.maincase { fill: none; stroke: #8a8f4a; stroke-width: 12; }
.main { fill: none; stroke: #f7fabf; stroke-width: 10; }
.bldg { fill: #d9d0c9; stroke: #c2afa1; stroke-width: .9; }
.court { fill: #ffffe5; stroke: #c6b4a6; stroke-width: .8; }
.ramp { stroke: #fff; stroke-width: 6; } .rampdash { stroke: #aaa; stroke-width: 6; stroke-dasharray: 6 10; }
.foot { fill: none; stroke: #fa8072; stroke-width: 1.8; stroke-dasharray: 3 2.6; }
.cycle { fill: none; stroke: #3a3af5; stroke-width: 1.7; stroke-dasharray: 3.5 2.8; }
.bridge { stroke: #666; stroke-width: 1; }
.tree { fill: #8fc08a; }
.shaft { fill: none; stroke: #555; stroke-width: 1.5; }
.arrow { fill: #555; }
.shelter { fill: none; stroke: #777; stroke-width: 1.8; }
.shield { fill: #ecebe9; stroke: #c9c9c9; } .k2 { fill: #eff1cf; stroke: #c4c79b; }
.shieldtext { font: 600 12px "Noto Sans", sans-serif; fill: #666; } .k2t { font-size: 13px; fill: #6d7339; }
.parksign { font: 500 21px "Noto Sans", sans-serif; fill: #0092da; stroke: #0092da; stroke-width: .5; }
.label { font: 500 12.5px "Noto Sans", sans-serif; fill: #3c3c3c; stroke: rgba(255, 255, 255, .75); stroke-width: 2.4; stroke-linejoin: round; paint-order: stroke; }
.purple { fill: #8d618b; font-size: 13px; }
.river { fill: #5b8fc4; font-style: italic; }
.pond { fill: #6b93c8; font-size: 13.5px; font-style: italic; stroke: rgba(220, 235, 240, .7); }
.olive { fill: #6b6b2a; font-size: 13px; font-style: italic; }
.green { fill: #2f7d3a; font-size: 15px; font-style: italic; }
.field { fill: #3f8f6e; font-size: 13px; font-style: italic; }
.blue { fill: #2f7fe8; font-size: 13px; }
.place { fill: #777; font-size: 18px; font-weight: 400; }
</style>
